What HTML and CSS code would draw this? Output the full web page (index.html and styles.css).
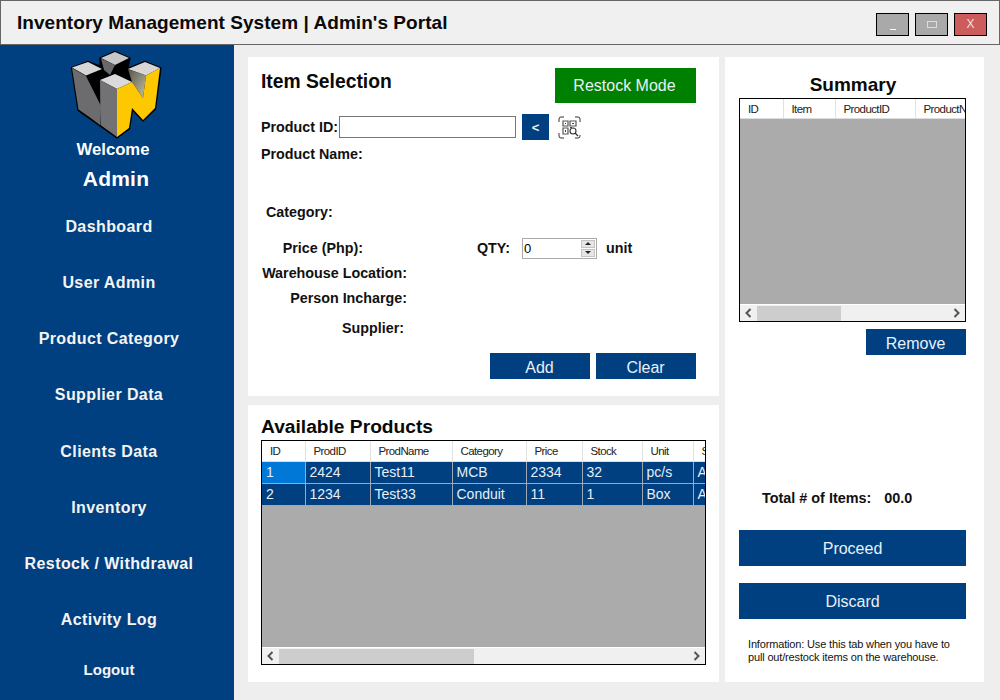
FILE: index.html
```html
<!DOCTYPE html>
<html lang="en">
<head>
<meta charset="utf-8">
<title>Inventory Management System</title>
<link rel="stylesheet" href="styles.css">
</head>
<body>
<div class="window">
  <header class="titlebar">
    <h1 class="app-title">Inventory Management System | Admin's Portal</h1>
    <div class="win-buttons">
      <div class="win-btn"><span class="glyph-min"></span></div>
      <div class="win-btn"><span class="glyph-max"></span></div>
      <div class="win-btn win-close">X</div>
    </div>
  </header>
  <div class="body-row">
    <aside class="sidebar">
      <svg class="logo" viewBox="70 50 92 90" width="92" height="90" aria-hidden="true">
        <defs>
          <linearGradient id="fade" x1="0" y1="0" x2="1" y2="1">
            <stop offset="0" stop-color="#55554d"/>
            <stop offset="1" stop-color="#c4c1a4"/>
          </linearGradient>
        </defs>
        <path d="M71.500 67.500 88 61.500 100 66 100 58 115 51.500 130 58 128 68 145 61.500 161 68 155.500 109 143 121 132.500 110 129.500 129 117 138 100 126 78 110.500Z" fill="#000" stroke="#000" stroke-width="1.200"/>
        <path d="M72 67.500 88 62 102 69 86 75.500Z" fill="#d6d6d6"/>
        <path d="M72 68 86 76 101 106 100 125 90 117.500 78.500 109.500Z" fill="#6c6c6e"/>
        <path d="M101 58 115 52 129 58 115 65Z" fill="#c8c8c8"/>
        <path d="M101 58.500 115 65 110 75 104 70Z" fill="#68686c"/>
        <path d="M128 69 145 62 160 68 146 75.500Z" fill="#d6d6d6"/>
        <path d="M128 69 146 75.500 143 98 132 82Z" fill="url(#fade)"/>
        <path d="M100 80 115 74 132 82 117 89Z" fill="#dadada"/>
        <path d="M100 80 117 89 117 137 100.500 125Z" fill="#727274"/>
        <path d="M117 89 132 82 143 98 146 75.500 160 68 155 108 143 120 132 108 129 128 117 137Z" fill="#fdc800"/>
      </svg>
      <div class="welcome">Welcome</div>
      <div class="username">Admin</div>
      <nav class="nav">
        <a class="nav-item">Dashboard</a>
        <a class="nav-item">User Admin</a>
        <a class="nav-item">Product Category</a>
        <a class="nav-item">Supplier Data</a>
        <a class="nav-item">Clients Data</a>
        <a class="nav-item">Inventory</a>
        <a class="nav-item">Restock / Withdrawal</a>
        <a class="nav-item">Activity Log</a>
        <a class="nav-item nav-logout">Logout</a>
      </nav>
    </aside>
    <main class="content">
      <div class="left-col">
        <section class="panel item-panel">
          <div class="item-head">
            <h2 class="panel-title item-title">Item Selection</h2>
            <button class="btn btn-restock">Restock Mode</button>
          </div>
          <div class="form-row row-id">
            <span class="label label-id">Product ID:</span>
            <input class="id-input" type="text">
            <button class="btn btn-back">&lt;</button>
            <svg class="qr" viewBox="0 0 23 23" width="23" height="23" aria-hidden="true">
              <path d="M1 6V3Q1 1 3 1H6M17 1H20Q22 1 22 3V6M1 17V20Q1 22 3 22H6M17 22H20Q22 22 22 20V19" fill="none" stroke="#333" stroke-width="1"/>
              <path d="M5 5H10V10H5ZM12 5H18V10H12ZM5 12H10V18H5Z" fill="none" stroke="#555" stroke-width="1.200"/>
              <path d="M7 7H8V8H7ZM14 7H16V8H14ZM7 14H8V16H7ZM12 11H14V12H12Z" fill="#444"/>
              <circle cx="15" cy="15" r="3" fill="#fff" stroke="#333" stroke-width="1.100"/>
              <path d="M17 17 20 20" stroke="#333" stroke-width="1.200"/>
            </svg>
          </div>
          <div class="form-row row-name"><span class="label">Product Name:</span></div>
          <div class="form-row row-cat"><span class="label">Category:</span></div>
          <div class="form-row row-price">
            <span class="label label-price">Price (Php):</span>
            <span class="label label-qty">QTY:</span>
            <div class="spin">
              <span class="spin-value">0</span>
              <div class="spin-btns"><span class="spin-up"></span><span class="spin-down"></span></div>
            </div>
            <span class="label label-unit">unit</span>
          </div>
          <div class="form-row row-wh"><span class="label label-wh">Warehouse Location:</span></div>
          <div class="form-row row-person"><span class="label label-wh">Person Incharge:</span></div>
          <div class="form-row row-sup"><span class="label label-sup">Supplier:</span></div>
          <div class="item-actions">
            <button class="btn btn-small">Add</button>
            <button class="btn btn-small">Clear</button>
          </div>
        </section>
        <section class="panel products-panel">
          <h2 class="panel-title products-title">Available Products</h2>
          <div class="grid-box products-grid">
            <div class="grid-view">
              <table class="dg dg-products">
                <colgroup>
                  <col class="c-id"><col class="c-prodid"><col class="c-name"><col class="c-cat"><col class="c-price"><col class="c-stock"><col class="c-unit"><col class="c-s">
                </colgroup>
                <thead>
                  <tr><th>ID</th><th>ProdID</th><th>ProdName</th><th>Category</th><th>Price</th><th>Stock</th><th>Unit</th><th>Supplier</th></tr>
                </thead>
                <tbody>
                  <tr><td class="cell-current">1</td><td>2424</td><td>Test11</td><td>MCB</td><td>2334</td><td>32</td><td>pc/s</td><td>ABC</td></tr>
                  <tr><td>2</td><td>1234</td><td>Test33</td><td>Conduit</td><td>11</td><td>1</td><td>Box</td><td>ABC</td></tr>
                </tbody>
              </table>
            </div>
            <div class="hscroll">
              <svg class="arrow" viewBox="0 0 8 10" width="8" height="10" aria-hidden="true"><path d="M6 1 2 5 6 9" fill="none" stroke="#555" stroke-width="2"/></svg>
              <div class="track"><div class="thumb thumb-products"></div></div>
              <svg class="arrow" viewBox="0 0 8 10" width="8" height="10" aria-hidden="true"><path d="M2 1 6 5 2 9" fill="none" stroke="#555" stroke-width="2"/></svg>
            </div>
          </div>
        </section>
      </div>
      <section class="panel summary-panel">
        <h2 class="panel-title summary-title">Summary</h2>
        <div class="grid-box summary-grid">
          <div class="grid-view">
            <table class="dg dg-summary">
              <colgroup>
                <col class="s-id"><col class="s-item"><col class="s-pid"><col class="s-pn">
              </colgroup>
              <thead>
                <tr><th>ID</th><th>Item</th><th>ProductID</th><th>ProductName</th></tr>
              </thead>
            </table>
          </div>
          <div class="hscroll">
            <svg class="arrow" viewBox="0 0 8 10" width="8" height="10" aria-hidden="true"><path d="M6 1 2 5 6 9" fill="none" stroke="#555" stroke-width="2"/></svg>
            <div class="track"><div class="thumb thumb-summary"></div></div>
            <svg class="arrow" viewBox="0 0 8 10" width="8" height="10" aria-hidden="true"><path d="M2 1 6 5 2 9" fill="none" stroke="#555" stroke-width="2"/></svg>
          </div>
        </div>
        <div class="remove-row"><button class="btn btn-small">Remove</button></div>
        <div class="total-row"><span>Total # of Items:</span><span>00.0</span></div>
        <button class="btn btn-wide btn-proceed">Proceed</button>
        <button class="btn btn-wide btn-discard">Discard</button>
        <p class="info">Information: Use this tab when you have to<br>pull out/restock items on the warehouse.</p>
      </section>
    </main>
  </div>
</div>
</body>
</html>
```
FILE: styles.css
```css
* { box-sizing: border-box; }
html, body { margin: 0; padding: 0; }
body { width: 1000px; height: 700px; overflow: hidden; font-family: "Liberation Sans", Arial, sans-serif; color: #000; }
.window { width: 1000px; height: 700px; display: flex; flex-direction: column; background: #eee; }

.titlebar { height: 45px; flex: none; display: flex; align-items: center; justify-content: space-between; background: #f0f0f0; border: 1px solid #666; padding: 0 12px 0 16px; }
.app-title { margin: 0; font-size: 19px; font-weight: bold; letter-spacing: 0.05px; color: #0a0a0a; }
.win-buttons { display: flex; gap: 6px; margin-top: 3px; }
.win-btn { width: 33px; height: 23px; background: #a9a9a9; border: 1px solid #000; display: flex; align-items: center; justify-content: center; color: #f2e0e0; font-size: 12px; }
.win-close { background: #cd5c5c; }
.glyph-min { width: 6px; height: 1px; background: #fff; margin-top: 10px; }
.glyph-max { width: 10px; height: 7px; border: 1px solid #ddd; }

.body-row { flex: 1; display: flex; min-height: 0; }
.sidebar { width: 234px; flex: none; background: #004080; color: #fff; display: flex; flex-direction: column; align-items: center; padding-top: 5px; }
.logo { display: block; margin-right: 2px; flex: none; }
.welcome { font-size: 16.7px; font-weight: bold; line-height: 19px; margin-right: 8px; }
.username { font-size: 21px; font-weight: bold; line-height: 24px; margin-top: 8px; margin-right: 2px; letter-spacing: 0.2px; }
.nav { display: flex; flex-direction: column; align-items: center; width: 100%; margin-top: 26px; padding-right: 16px; }
.nav-item { height: 56.15px; line-height: 20px; font-size: 16px; font-weight: bold; letter-spacing: 0.4px; color: #f4f4f4; white-space: nowrap; }
.nav-logout { height: 20px; margin-top: -6px; font-size: 15px; letter-spacing: 0; }

.content { flex: 1; display: flex; gap: 6px; padding: 12px 16px 18px 14px; min-width: 0; }
.left-col { width: 471px; flex: none; display: flex; flex-direction: column; gap: 9px; }
.panel { background: #fff; }
.panel-title { margin: 0; font-weight: bold; color: #0a0a0a; }

.item-panel { height: 339px; flex: none; padding: 11px 23px 0 13px; }
.item-head { display: flex; justify-content: space-between; height: 35px; }
.item-title { font-size: 19.3px; line-height: 28px; }
.btn { border: 0; padding: 0; margin: 0; background: #004080; color: #e8f0f8; font-family: "Liberation Sans", Arial, sans-serif; font-size: 16px; }
.btn-restock { width: 141px; height: 35px; background: #008000; padding-right: 2px; }
.form-row { display: flex; align-items: center; height: 20px; }
.label { font-size: 14.3px; font-weight: bold; color: #111; white-space: nowrap; }
.label-id { width: 78px; }
.row-id { height: 26px; margin-top: 11px; }
.id-input { width: 177px; height: 22px; border: 1px solid #767676; padding: 0 2px; margin: 0; background: #fff; }
.btn-back { width: 27px; height: 26px; margin-left: 6px; font-size: 13px; font-weight: bold; }
.qr { margin-left: 9px; }
.row-name { margin-top: 4px; }
.row-cat { margin-top: 38px; padding-left: 5px; }
.row-price { margin-top: 16px; }
.label-price { width: 102px; text-align: right; }
.label-qty { margin-left: 114px; width: 35px; }
.spin { width: 75px; height: 21px; margin-left: 10px; border: 1px solid #aaa; display: flex; align-items: center; justify-content: space-between; padding: 0 1px 0 1px; background: #fff; }
.spin-value { font-size: 13px; }
.spin-btns { width: 14px; height: 17px; display: flex; flex-direction: column; gap: 1px; }
.spin-up, .spin-down { flex: 1; background: #e6e6e6; border: 1px solid #c4c4c4; position: relative; }
.spin-up::after, .spin-down::after { content: ""; position: absolute; left: 3px; top: 1px; border-left: 3px solid transparent; border-right: 3px solid transparent; }
.spin-up::after { border-bottom: 3px solid #222; }
.spin-down::after { border-top: 3px solid #222; }
.label-unit { margin-left: 9px; }
.row-wh { margin-top: 5px; }
.row-person { margin-top: 5px; }
.row-sup { margin-top: 10px; }
.label-wh { width: 146px; text-align: right; }
.label-sup { width: 143px; text-align: right; }
.item-actions { display: flex; justify-content: flex-end; gap: 6px; margin-top: 15px; }
.btn-small { width: 100px; height: 26px; padding: 3px 1px 0 0; }

.products-panel { flex: 1; min-height: 0; padding: 11px 13px 17px 13px; display: flex; flex-direction: column; }
.products-title { font-size: 19.2px; line-height: 22px; margin-bottom: 2px; }
.grid-box { border: 1px solid #000; display: flex; flex-direction: column; background: #ababab; }
.products-grid { flex: 1; min-height: 0; }
.grid-view { flex: 1; min-height: 0; overflow: hidden; }
.dg { table-layout: fixed; border-collapse: collapse; }
.dg-products { width: 490px; }
.dg th { height: 20px; padding: 0 0 0 8px; background: #fff; border-right: 1px solid #e2e2e2; border-bottom: 1px solid #ddd; font-size: 11.5px; font-weight: normal; text-align: left; letter-spacing: -0.6px; color: #222; white-space: nowrap; overflow: hidden; }
.dg-summary th { height: 19px; padding-top: 2px; }
.dg td { height: 22px; padding: 0 0 0 4px; background: #004080; color: #e6eef6; border-right: 1px solid #9fa9b5; border-bottom: 1px solid #9fa9b5; font-size: 14px; white-space: nowrap; overflow: hidden; }
.dg td.cell-current { background: #0078d7; }
.c-id { width: 43px; } .c-prodid { width: 65px; } .c-name { width: 82px; } .c-cat { width: 74px; } .c-price { width: 56px; } .c-stock { width: 60px; } .c-unit { width: 51px; } .c-s { width: 59px; }
.hscroll { height: 17px; flex: none; display: flex; align-items: center; background: #f0f0f0; border-top: 1px solid #fff; }
.arrow { flex: none; width: 17px; }
.track { flex: 1; height: 15px; }
.thumb { height: 100%; background: #cdcdcd; }
.thumb-products { width: 195px; }
.thumb-summary { width: 84px; }

.summary-panel { width: 259px; flex: none; padding: 16px 18px 0 14px; display: flex; flex-direction: column; }
.summary-title { font-size: 19px; line-height: 24px; margin: 0 0 1px 1px; text-align: center; }
.summary-grid { height: 224px; flex: none; }
.dg-summary { width: 300px; }
.s-id { width: 43px; } .s-item { width: 52px; } .s-pid { width: 80px; } .s-pn { width: 125px; }
.remove-row { display: flex; justify-content: flex-end; margin-top: 7px; }
.total-row { display: flex; gap: 13px; height: 20px; align-items: center; margin-top: 133px; padding-left: 23px; font-size: 14.4px; font-weight: bold; color: #111; }
.btn-wide { width: 227px; height: 36px; flex: none; padding-top: 2px; }
.btn-proceed { margin-top: 22px; }
.btn-discard { margin-top: 17px; }
.info { margin: 19px 0 0 9px; font-size: 11px; line-height: 13px; letter-spacing: -0.16px; color: #111; }
```
